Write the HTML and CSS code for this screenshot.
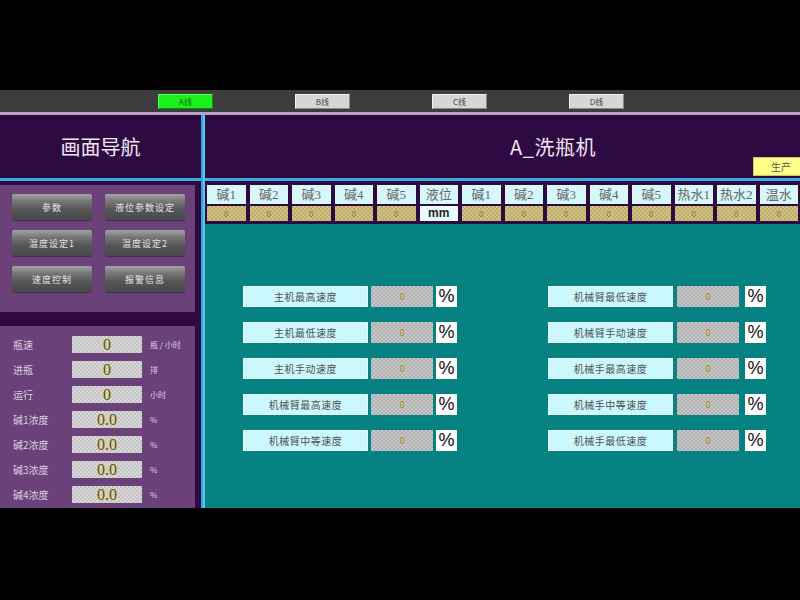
FILE: index.html
```html
<!DOCTYPE html>
<html lang="zh">
<head>
<meta charset="utf-8">
<link rel="stylesheet" href="styles.css">
</head>
<body>
<div class="screen">
  <div class="top-black"></div>
  <div class="tabbar">
    <div class="tab tab-active">A线</div>
    <div class="tab">B线</div>
    <div class="tab">C线</div>
    <div class="tab">D线</div>
  </div>
  <div class="lilac"></div>
  <div class="main">
    <div class="col-left">
      <div class="head head-left">画面导航</div>
      <div class="hline"></div>
      <div class="left-body">
        <div class="panel panel-nav">
          <div class="navbtn">参数</div>
          <div class="navbtn">液位参数设定</div>
          <div class="navbtn">温度设定1</div>
          <div class="navbtn">温度设定2</div>
          <div class="navbtn">速度控制</div>
          <div class="navbtn">报警信息</div>
        </div>
        <div class="panel panel-data">
          <div class="drow"><span class="dlabel">瓶速</span><span class="dval">0</span><span class="dunit">瓶 / 小时</span></div>
          <div class="drow"><span class="dlabel">进瓶</span><span class="dval">0</span><span class="dunit">排</span></div>
          <div class="drow"><span class="dlabel">运行</span><span class="dval">0</span><span class="dunit">小时</span></div>
          <div class="drow"><span class="dlabel">碱1浓度</span><span class="dval">0.0</span><span class="dunit">%</span></div>
          <div class="drow"><span class="dlabel">碱2浓度</span><span class="dval">0.0</span><span class="dunit">%</span></div>
          <div class="drow"><span class="dlabel">碱3浓度</span><span class="dval">0.0</span><span class="dunit">%</span></div>
          <div class="drow"><span class="dlabel">碱4浓度</span><span class="dval">0.0</span><span class="dunit">%</span></div>
        </div>
      </div>
    </div>
    <div class="vline"></div>
    <div class="col-right">
      <div class="head head-right">
        <span class="title">A_洗瓶机</span>
        <div class="badge">生产</div>
      </div>
      <div class="hline"></div>
      <div class="table-area">
        <div class="tgrid">
          <div class="th">碱1</div><div class="th">碱2</div><div class="th">碱3</div><div class="th">碱4</div><div class="th">碱5</div><div class="th">液位</div><div class="th">碱1</div><div class="th">碱2</div><div class="th">碱3</div><div class="th">碱4</div><div class="th">碱5</div><div class="th">热水1</div><div class="th">热水2</div><div class="th">温水</div>
          <div class="td">0</div><div class="td">0</div><div class="td">0</div><div class="td">0</div><div class="td">0</div><div class="td td-unit">mm</div><div class="td">0</div><div class="td">0</div><div class="td">0</div><div class="td">0</div><div class="td">0</div><div class="td">0</div><div class="td">0</div><div class="td">0</div>
        </div>
      </div>
      <div class="teal">
        <div class="group group-left">
          <div class="srow"><div class="slabel">主机最高速度</div><div class="sval">0</div><div class="spct">%</div></div>
          <div class="srow"><div class="slabel">主机最低速度</div><div class="sval">0</div><div class="spct">%</div></div>
          <div class="srow"><div class="slabel">主机手动速度</div><div class="sval">0</div><div class="spct">%</div></div>
          <div class="srow"><div class="slabel">机械臂最高速度</div><div class="sval">0</div><div class="spct">%</div></div>
          <div class="srow"><div class="slabel">机械臂中等速度</div><div class="sval">0</div><div class="spct">%</div></div>
        </div>
        <div class="group group-right">
          <div class="srow"><div class="slabel">机械臂最低速度</div><div class="sval">0</div><div class="spct">%</div></div>
          <div class="srow"><div class="slabel">机械臂手动速度</div><div class="sval">0</div><div class="spct">%</div></div>
          <div class="srow"><div class="slabel">机械手最高速度</div><div class="sval">0</div><div class="spct">%</div></div>
          <div class="srow"><div class="slabel">机械手中等速度</div><div class="sval">0</div><div class="spct">%</div></div>
          <div class="srow"><div class="slabel">机械手最低速度</div><div class="sval">0</div><div class="spct">%</div></div>
        </div>
      </div>
    </div>
  </div>
</div>
</body>
</html>
```

FILE: styles.css
```css
* { box-sizing: border-box; }
html, body { margin: 0; padding: 0; background: #000; }
body { font-family: "Noto Sans CJK SC", "Noto Sans", sans-serif; }
.screen { width: 800px; height: 600px; background: #000; overflow: hidden; }
.top-black { height: 90px; }
.tabbar {
  height: 22px; background: #3d3d3d;
  display: flex; align-items: center; padding-left: 158px; gap: 82px;
}
.tab {
  width: 55px; height: 15px; background: #d6d6d6;
  border: 1px solid #f0f0f0; border-right-color: #8a8a8a; border-bottom-color: #8a8a8a;
  font-family: "Noto Sans CJK SC", serif; font-size: 8px; line-height: 13px;
  text-align: center; color: #444;
}
.tab-active { background: #1cf01c; border-color: #60ff60 #089008 #089008 #60ff60; color: #116611; }
.lilac { height: 3px; background: #b9a2c4; }
.main { height: 393px; display: flex; background: #2e0a42; }
.col-left { width: 201px; display: flex; flex-direction: column; }
.vline { width: 4px; background: linear-gradient(90deg, #2fa6dc 0 2px, #5fc4ec 2px); }
.col-right { flex: 1; display: flex; flex-direction: column; min-width: 0; }
.head { height: 63px; display: flex; align-items: center; color: #f2e6f4; font-size: 20px; }
.head-left { justify-content: center; }
.head-right { position: relative; padding-left: 101px; justify-content: center; }
.title { letter-spacing: 0.5px; }
.badge {
  position: absolute; left: 548px; top: 42px; width: 47px; height: 19px;
  background: #ffff88; border: 1px solid #c8c860; border-right: none;
  color: #555; font-size: 10px; line-height: 17px; padding-left: 17px; white-space: nowrap;
}
.hline { height: 3px; background: #3aade0; }
.left-body { flex: 1; display: flex; flex-direction: column; padding-top: 4px; gap: 14px; }
.panel { width: 195px; background: #6a4279; }
.panel-nav {
  height: 127px; display: grid; grid-template-columns: 80px 80px;
  grid-auto-rows: 26px; column-gap: 13px; row-gap: 10px;
  padding: 9px 0 0 12px;
}
.navbtn {
  background: linear-gradient(180deg, #a4a4a4 0%, #7a7a7a 25%, #555 60%, #4a4a4a 100%);
  border-radius: 2px; box-shadow: 0 1px 1px rgba(0,0,0,0.35);
  color: #e4e4e4; font-family: "Noto Sans CJK SC", serif; font-size: 9px;
  letter-spacing: 1px; display: flex; align-items: center; justify-content: center;
}
.panel-data { flex: 1; display: flex; flex-direction: column; gap: 8px; padding: 10px 0 0 13px; }
.drow { height: 17px; display: flex; align-items: center; }
.dlabel { width: 59px; color: #dccde4; font-size: 10px; }
.dval {
  width: 70px; height: 17px;
  background: repeating-conic-gradient(#d8d8d8 0 25%, #c2c2c2 0 50%) 0 0 / 4px 4px;
  color: #5e5020; font-family: "Liberation Serif", serif; font-size: 16px; line-height: 17px;
  text-align: center; text-shadow: 0 0 3px #f0e060;
}
.dunit { margin-left: 8px; color: #dccde4; font-size: 8px; }
.table-area { height: 43px; padding: 4px 2px 0 2px; }
.tgrid { display: grid; grid-template-columns: repeat(14, 1fr); column-gap: 4px; row-gap: 2px; grid-template-rows: 19px 15px; }
.th {
  background: #d6f8fc; color: #666; font-family: "Liberation Serif", "Noto Sans CJK SC", serif;
  font-size: 13px; line-height: 19px; text-align: center; white-space: nowrap;
}
.td {
  background: repeating-conic-gradient(#d2c486 0 25%, #bcad6c 0 50%) 0 0 / 4px 4px;
  color: #8a7a30; font-size: 8px; line-height: 15px; text-align: center;
}
.td-unit { background: #e8fcff; color: #222; font-family: "Liberation Sans", sans-serif; font-size: 12px; font-weight: bold; }
.teal { flex: 1; background: #078282; display: flex; padding: 62px 0 0 38px; }
.group { display: flex; flex-direction: column; gap: 15px; }
.group-left { width: 305px; }
.srow { height: 21px; display: flex; }
.slabel {
  width: 125px; background: #cbf8fd; border: 1px solid #e8ffff;
  color: #505050; font-family: "Noto Sans CJK SC", serif; font-size: 10px;
  display: flex; align-items: center; justify-content: center; letter-spacing: 0.5px;
}
.sval {
  width: 62px; margin-left: 3px;
  background: repeating-conic-gradient(#c6c6c6 0 25%, #b0b0b0 0 50%) 0 0 / 4px 4px;
  color: #9a8030; font-size: 9px; line-height: 21px; text-align: center; text-shadow: 0 0 2px #f0e080;
}
.spct {
  width: 21px; margin-left: 3px; background: #fff;
  color: #111; font-family: "Liberation Sans", sans-serif; font-size: 18px; line-height: 21px; text-align: center;
}
.group-right .sval { margin-left: 4px; }
.group-right .spct { margin-left: 6px; }
```
